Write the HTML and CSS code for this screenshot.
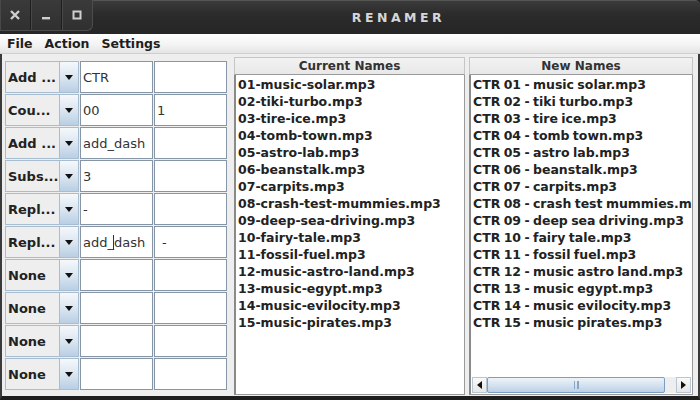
FILE: index.html
```html
<!DOCTYPE html>
<html>
<head>
<meta charset="utf-8">
<link rel="stylesheet" href="styles.css">
</head>
<body>
<div class="window">
  <header class="titlebar">
    <div class="controls">
      <div class="ctrl"><svg width="10" height="10" viewBox="0 0 10 10"><path d="M1 1L9 9M9 1L1 9" stroke="#cfcfcf" stroke-width="2.4"/></svg></div>
      <div class="ctrl"><svg width="10" height="10" viewBox="0 0 10 10"><rect x="1" y="7" width="8" height="2.4" fill="#cfcfcf"/></svg></div>
      <div class="ctrl"><svg width="10" height="10" viewBox="0 0 10 10"><rect x="1.5" y="1.5" width="7" height="7" fill="none" stroke="#cfcfcf" stroke-width="2"/></svg></div>
    </div>
    <div class="title">RENAMER</div>
  </header>
  <nav class="menubar">
    <span class="menu">File</span>
    <span class="menu">Action</span>
    <span class="menu">Settings</span>
  </nav>
  <main class="content">
    <section class="rules">
      <div class="combo">Add ...</div><div class="arrow"><span class="tri"></span></div><div class="field">CTR</div><div class="field"></div>
      <div class="combo">Cou...</div><div class="arrow"><span class="tri"></span></div><div class="field">00</div><div class="field">1</div>
      <div class="combo">Add ...</div><div class="arrow"><span class="tri"></span></div><div class="field">add_dash</div><div class="field"></div>
      <div class="combo">Subs...</div><div class="arrow"><span class="tri"></span></div><div class="field">3</div><div class="field"></div>
      <div class="combo">Repl...</div><div class="arrow"><span class="tri"></span></div><div class="field">-</div><div class="field"></div>
      <div class="combo">Repl...</div><div class="arrow"><span class="tri"></span></div><div class="field">add_<span class="caret"></span>dash</div><div class="field indent">-</div>
      <div class="combo">None</div><div class="arrow"><span class="tri"></span></div><div class="field"></div><div class="field"></div>
      <div class="combo">None</div><div class="arrow"><span class="tri"></span></div><div class="field"></div><div class="field"></div>
      <div class="combo">None</div><div class="arrow"><span class="tri"></span></div><div class="field"></div><div class="field"></div>
      <div class="combo">None</div><div class="arrow"><span class="tri"></span></div><div class="field"></div><div class="field"></div>
    </section>
    <section class="panel current">
      <div class="phead">Current Names</div>
      <div class="list">
        <div>01-music-solar.mp3</div>
        <div>02-tiki-turbo.mp3</div>
        <div>03-tire-ice.mp3</div>
        <div>04-tomb-town.mp3</div>
        <div>05-astro-lab.mp3</div>
        <div>06-beanstalk.mp3</div>
        <div>07-carpits.mp3</div>
        <div>08-crash-test-mummies.mp3</div>
        <div>09-deep-sea-driving.mp3</div>
        <div>10-fairy-tale.mp3</div>
        <div>11-fossil-fuel.mp3</div>
        <div>12-music-astro-land.mp3</div>
        <div>13-music-egypt.mp3</div>
        <div>14-music-evilocity.mp3</div>
        <div>15-music-pirates.mp3</div>
      </div>
    </section>
    <section class="panel new">
      <div class="phead">New Names</div>
      <div class="listwrap">
        <div class="list">
          <div>CTR 01 - music solar.mp3</div>
          <div>CTR 02 - tiki turbo.mp3</div>
          <div>CTR 03 - tire ice.mp3</div>
          <div>CTR 04 - tomb town.mp3</div>
          <div>CTR 05 - astro lab.mp3</div>
          <div>CTR 06 - beanstalk.mp3</div>
          <div>CTR 07 - carpits.mp3</div>
          <div>CTR 08 - crash test mummies.mp3</div>
          <div>CTR 09 - deep sea driving.mp3</div>
          <div>CTR 10 - fairy tale.mp3</div>
          <div>CTR 11 - fossil fuel.mp3</div>
          <div>CTR 12 - music astro land.mp3</div>
          <div>CTR 13 - music egypt.mp3</div>
          <div>CTR 14 - music evilocity.mp3</div>
          <div>CTR 15 - music pirates.mp3</div>
        </div>
        <div class="hscroll">
          <div class="sbtn"><span class="tri-l"></span></div>
          <div class="thumb"><span class="grip"></span></div>
          <div class="track"></div>
          <div class="sbtn"><span class="tri-r"></span></div>
        </div>
      </div>
    </section>
  </main>
</div>
</body>
</html>
```
FILE: styles.css
```css
* { box-sizing: border-box; }
html, body { margin: 0; padding: 0; background: #1c1c1c; }
body { font-family: "DejaVu Sans", "Liberation Sans", sans-serif; }

.window {
  width: 700px;
  height: 400px;
  display: flex;
  flex-direction: column;
  background: #1e1e1e;
  overflow: hidden;
}

.titlebar {
  height: 34px;
  flex: none;
  display: flex;
  background: linear-gradient(#3b3b3b, #2b2b2b 40%, #262626);
  border-top: 1px solid #555;
  border-radius: 5px 5px 0 0;
}
.controls {
  display: flex;
  height: 31px;
  margin-top: -1px;
  background: linear-gradient(#3a3a3a, #303030);
  border-right: 1px solid #4c4c4c;
  border-bottom: 1px solid #4c4c4c;
  border-bottom-right-radius: 6px;
}
.ctrl {
  width: 31px;
  display: flex;
  align-items: center;
  justify-content: center;
  border-right: 1px solid #1e1e1e;
  box-shadow: inset 1px 0 #484848;
}
.ctrl:last-child { border-right: none; width: 30px; }
.title {
  flex: 1;
  text-align: center;
  color: #d6d6d6;
  font-weight: bold;
  font-size: 12.5px;
  letter-spacing: 3.5px;
  line-height: 33px;
  padding-left: 4px;
}

.menubar {
  height: 20px;
  flex: none;
  display: flex;
  align-items: center;
  background: linear-gradient(#ffffff, #f2f2f2 60%, #e4e4e4);
  border-bottom: 1px solid #cfcfcf;
  padding-left: 7px;
}
.menu {
  font-weight: bold;
  font-size: 12.5px;
  color: #1e1e1e;
  margin-right: 12px;
}

.content {
  flex: 1;
  display: flex;
  align-items: stretch;
  background: #eeeeee;
  padding: 3px 5px 1px 3px;
  border-left: 2px solid #3a3a3a;
  border-right: 2px solid #3a3a3a;
  border-bottom: 4px solid #1e1e1e;
}

.rules {
  width: 224px;
  margin-top: 4px;
  display: grid;
  grid-template-columns: 55px 19px 74px 74px;
  grid-auto-rows: 32px;
  row-gap: 1px;
  column-gap: 0;
  align-content: start;
}
.combo {
  border: 1px solid #a9bdd1;
  background: #eeeeee;
  font-weight: bold;
  font-size: 13px;
  color: #222;
  display: flex;
  align-items: center;
  padding-left: 2px;
  white-space: nowrap;
  overflow: hidden;
}
.arrow {
  border: 1px solid #a9bdd1;
  border-left: none;
  background: linear-gradient(#f5f8fb, #dbe6f1 50%, #b9cfe4);
  display: flex;
  align-items: center;
  justify-content: center;
}
.tri {
  width: 0;
  height: 0;
  border-left: 4.5px solid transparent;
  border-right: 4.5px solid transparent;
  border-top: 5px solid #111;
}
.field {
  background: #fff;
  border: 1px solid #8696a6;
  margin-left: 1px;
  font-size: 13px;
  color: #333;
  display: flex;
  align-items: center;
  padding-left: 2px;
  white-space: nowrap;
  overflow: hidden;
}
.field.indent { padding-left: 7px; }
.caret {
  display: inline-block;
  width: 1px;
  height: 15px;
  background: #333;
  margin: 0 0 0 -1px;
}

.panel {
  display: flex;
  flex-direction: column;
  margin-left: 5px;
}
.panel.current { width: 231px; }
.panel.new { width: 224px; margin-left: 4px; }
.phead {
  height: 18px;
  flex: none;
  background: linear-gradient(#f2f2f2, #e8e8e8);
  border: 1px solid #c6c6c6;
  border-bottom: 1px solid #9a9a9a;
  text-align: center;
  font-weight: bold;
  font-size: 12px;
  line-height: 16px;
  color: #333;
}
.list {
  flex: 1;
  background: #fff;
  border: 1px solid #9a9a9a;
  border-left: 2px solid #8a8a8a;
  border-top: none;
  padding: 1px 0 0 2px;
  font-size: 12.5px;
  font-weight: bold;
  line-height: 17px;
  color: #222;
  white-space: nowrap;
  overflow: hidden;
  word-spacing: -1px;
}
.listwrap {
  flex: 1;
  display: flex;
  flex-direction: column;
  border: 1px solid #9a9a9a;
  border-left: 2px solid #8a8a8a;
  border-top: none;
  background: #fff;
}
.listwrap .list { border: none; padding-left: 2px; }
.hscroll {
  height: 16px;
  flex: none;
  display: flex;
  margin: 0 1px 1px 1px;
  background: #eeeeee;
}
.sbtn {
  width: 15px;
  border: 1px solid #b8c6d4;
  background: linear-gradient(#fafafa, #e6e6e6);
  display: flex;
  align-items: center;
  justify-content: center;
}
.tri-l {
  width: 0; height: 0;
  border-top: 4px solid transparent;
  border-bottom: 4px solid transparent;
  border-right: 5px solid #111;
}
.tri-r {
  width: 0; height: 0;
  border-top: 4px solid transparent;
  border-bottom: 4px solid transparent;
  border-left: 5px solid #111;
}
.thumb {
  width: 178px;
  border: 1px solid #7d9ec4;
  border-radius: 2px;
  background: linear-gradient(#eef3f9, #d6e3f0 50%, #bcd0e5);
  display: flex;
  align-items: center;
  justify-content: center;
}
.grip {
  width: 5px;
  height: 8px;
  border-left: 1px solid #8aa6c6;
  border-right: 1px solid #8aa6c6;
  background: linear-gradient(90deg, transparent 2px, #8aa6c6 2px, #8aa6c6 3px, transparent 3px);
}
.track { flex: 1; background: #eeeeee; }
```
